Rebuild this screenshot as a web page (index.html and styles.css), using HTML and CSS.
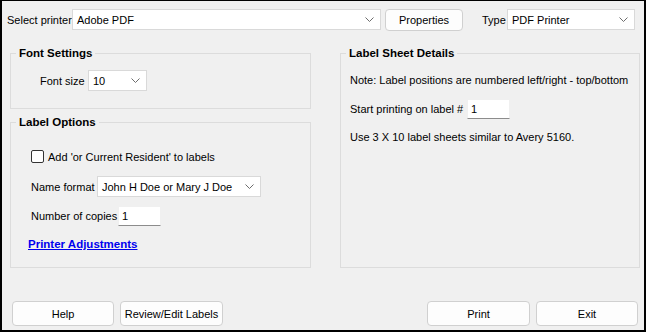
FILE: index.html
```html
<!DOCTYPE html>
<html lang="en">
<head>
  <meta charset="UTF-8">
  <title>Print Labels</title>
  <link rel="stylesheet" href="styles.css">
</head>
<body>
  <div class="window">
    <div class="printer-bar">
      <span class="label printer-label">Select printer</span>
      <div class="combo combo-printer">
        <span>Adobe PDF</span>
        <svg class="chevron" width="9" height="5" viewBox="0 0 9 5"><polyline points="0.5,0.5 4.5,4.5 8.5,0.5" /></svg>
      </div>
      <button class="button button-properties">Properties</button>
      <span class="label type-label">Type</span>
      <div class="combo combo-type">
        <span>PDF Printer</span>
        <svg class="chevron" width="9" height="5" viewBox="0 0 9 5"><polyline points="0.5,0.5 4.5,4.5 8.5,0.5" /></svg>
      </div>
    </div>

    <div class="main">
      <div class="column">
        <fieldset class="group group-font">
          <legend>Font Settings</legend>
          <div class="group-body font-body">
            <div class="row">
              <span class="label font-size-label">Font size</span>
              <div class="combo combo-font">
                <span>10</span>
                <svg class="chevron" width="9" height="5" viewBox="0 0 9 5"><polyline points="0.5,0.5 4.5,4.5 8.5,0.5" /></svg>
              </div>
            </div>
          </div>
        </fieldset>

        <fieldset class="group group-options">
          <legend>Label Options</legend>
          <div class="group-body options-body">
            <label class="row check-row">
              <input type="checkbox" class="check">
              <span>Add 'or Current Resident' to labels</span>
            </label>
            <div class="row name-row">
              <span class="label name-label">Name format</span>
              <div class="combo combo-name">
                <span>John H Doe or Mary J Doe</span>
                <svg class="chevron" width="9" height="5" viewBox="0 0 9 5"><polyline points="0.5,0.5 4.5,4.5 8.5,0.5" /></svg>
              </div>
            </div>
            <div class="row copies-row">
              <span class="label copies-label">Number of copies</span>
              <input type="text" class="field" value="1">
            </div>
            <a href="#" class="link">Printer Adjustments</a>
          </div>
        </fieldset>
      </div>

      <fieldset class="group group-sheet">
        <legend>Label Sheet Details</legend>
        <div class="group-body sheet-body">
          <div class="line">Note: Label positions are numbered left/right - top/bottom</div>
          <div class="row start-row">
            <span class="label start-label">Start printing on label #</span>
            <input type="text" class="field" value="1">
          </div>
          <div class="line">Use 3 X 10 label sheets similar to Avery 5160.</div>
        </div>
      </fieldset>
    </div>

    <div class="actions">
      <div class="actions-left">
        <button class="button button-wide">Help</button>
        <button class="button button-wide">Review/Edit Labels</button>
      </div>
      <div class="actions-right">
        <button class="button button-wide">Print</button>
        <button class="button button-wide">Exit</button>
      </div>
    </div>
  </div>
</body>
</html>
```

FILE: styles.css
```css
html, body {
  margin: 0;
  padding: 0;
  background: #000;
}

body {
  font-family: "Liberation Sans", Arial, sans-serif;
  font-size: 11px;
  color: #000;
}

.window {
  box-sizing: border-box;
  width: 646px;
  height: 332px;
  border-style: solid;
  border-color: #000;
  border-width: 1px 2px 2px 2px;
  background: #f0f0f0;
  display: flex;
  flex-direction: column;
}

/* top bar */
.printer-bar {
  display: flex;
  align-items: center;
  height: 21px;
  padding: 8px 9px 0 5px;
}

.label {
  white-space: nowrap;
  line-height: 14px;
}

.printer-label { width: 65px; }
.type-label { width: 25px; margin-left: 19px; }

.combo {
  box-sizing: border-box;
  height: 21px;
  background: #fff;
  border: 1px solid #d9d9d9;
  display: flex;
  align-items: center;
  justify-content: space-between;
  padding: 0 6px 0 4px;
  white-space: nowrap;
}

.chevron polyline {
  fill: none;
  stroke: #6d6d6d;
  stroke-width: 1;
}

.combo-printer { width: 309px; }
.combo-type { width: 128px; }
.combo-font { width: 59px; }
.combo-name { width: 164px; }

.button {
  box-sizing: border-box;
  font-family: inherit;
  font-size: 11px;
  color: #000;
  background: #fdfdfd;
  border: 1px solid #d0d0d0;
  border-radius: 4px;
  padding: 0;
  cursor: pointer;
}

.button-properties {
  width: 78px;
  height: 22px;
  margin-left: 4px;
  align-self: flex-start;
}

/* group boxes */
.main {
  display: flex;
  gap: 29px;
  padding: 0 4px 0 8px;
  margin-top: 16px;
}

.column {
  display: flex;
  flex-direction: column;
  gap: 6px;
}

.group {
  box-sizing: border-box;
  width: 301px;
  margin: 0;
  padding: 0;
  min-width: 0;
  border: 1px solid #dcdcdc;
}

.group legend {
  font-weight: bold;
  font-size: 11.5px;
  line-height: 14px;
  padding: 0 3px;
  margin-left: 5px;
}

.row {
  display: flex;
  align-items: center;
}

.font-body {
  padding: 10px 0 17px 29px;
}

.font-size-label { width: 48px; }

.options-body {
  display: flex;
  flex-direction: column;
  align-items: flex-start;
  padding: 21px 0 16px 20px;
}

.check-row {
  height: 13px;
  gap: 4px;
}

.check {
  appearance: none;
  -webkit-appearance: none;
  box-sizing: border-box;
  width: 13px;
  height: 13px;
  margin: 0;
  background: #fff;
  border: 1px solid #333;
  border-radius: 2px;
}

.name-row { margin-top: 13px; }
.name-label { width: 66px; }

.copies-row { margin-top: 9px; }
.copies-label { width: 87px; }

.field {
  box-sizing: border-box;
  width: 43px;
  height: 20px;
  margin: 0;
  padding: 0 3px;
  font-family: inherit;
  font-size: 11px;
  background: #fff;
  border: 1px solid #f0f0f0;
  border-bottom-color: #8c8c8c;
  outline: none;
}

.link {
  margin-top: 11px;
  margin-left: -3px;
  line-height: 14px;
  font-weight: bold;
  font-size: 11.5px;
  color: #0000ee;
  text-decoration: underline;
}

.sheet-body {
  padding: 13px 0 0 9px;
}

.line {
  line-height: 14px;
  white-space: nowrap;
}

.start-row { margin: 12px 0 11px 0; }
.start-label { width: 117px; }

/* bottom buttons */
.actions {
  margin-top: auto;
  display: flex;
  justify-content: space-between;
  padding: 0 6px 4px 10px;
}

.actions-left, .actions-right {
  display: flex;
  gap: 6px;
}

.button-wide {
  width: 102px;
  height: 25px;
}

.actions-left .button-wide:nth-child(2),
.actions-right .button-wide:nth-child(1) {
  width: 103px;
}
```
